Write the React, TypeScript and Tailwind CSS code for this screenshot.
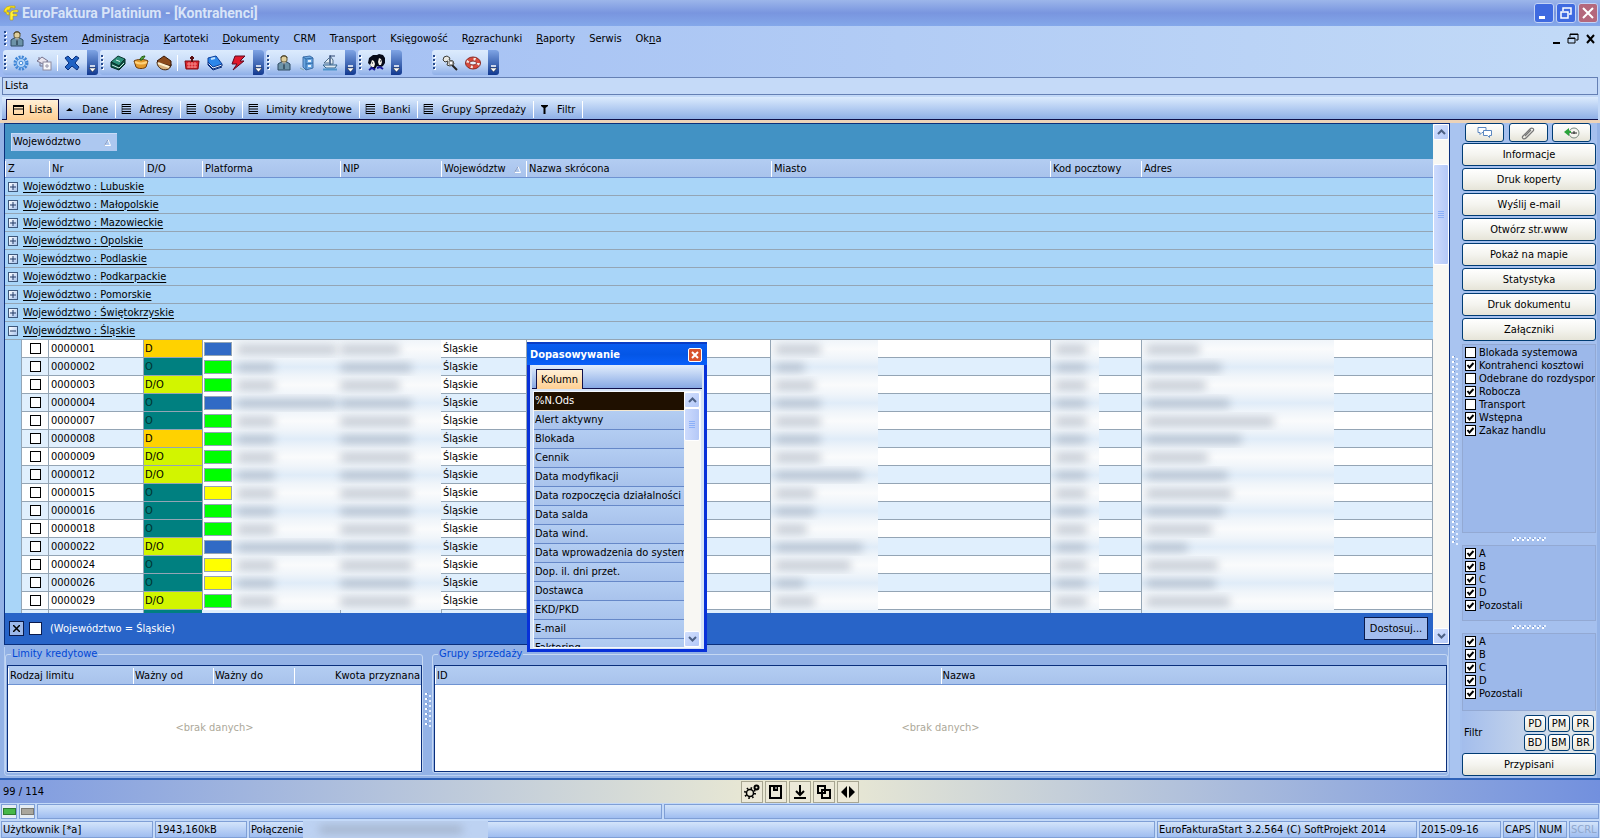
import { useState } from 'react';
import type { ReactNode } from 'react';

const MENU = [
  ['', 'S', 'ystem'],
  ['', 'A', 'dministracja'],
  ['', 'K', 'artoteki'],
  ['', 'D', 'okumenty'],
  ['CRM', '', ''],
  ['Transport', '', ''],
  ['Księ', 'g', 'owość'],
  ['R', 'o', 'zrachunki'],
  ['', 'R', 'aporty'],
  ['Serwis', '', ''],
  ['Ok', 'n', 'a'],
];

const TABS = [
  { label: 'Lista', icon: 'window' },
  { label: 'Dane', icon: 'up' },
  { label: 'Adresy', icon: 'list' },
  { label: 'Osoby', icon: 'list' },
  { label: 'Limity kredytowe', icon: 'list' },
  { label: 'Banki', icon: 'list' },
  { label: 'Grupy Sprzedaży', icon: 'list' },
  { label: 'Filtr', icon: 'filter' },
];

const GROUPS = ['Lubuskie', 'Małopolskie', 'Mazowieckie', 'Opolskie', 'Podlaskie', 'Podkarpackie', 'Pomorskie', 'Świętokrzyskie', 'Śląskie'];

const SWATCH: Record<string, string> = {
  b: 'bg-[#316ac5]',
  g: 'bg-[#00ff00]',
  y: 'bg-[#ffff00]',
};

const KIND: Record<string, string> = {
  D: 'bg-[#ffd200]',
  O: 'bg-[#008080] text-[#00332f]',
  'D/O': 'bg-[#d2f500]',
};

// nr, kind, swatch, widths of the hidden texts: name, nip, city, street
const ROWS: [string, string, string, number, number, number, number][] = [
  ['0000001', 'D', 'b', 100, 60, 46, 54],
  ['0000002', 'O', 'g', 38, 72, 30, 76],
  ['0000003', 'D/O', 'g', 38, 60, 40, 60],
  ['0000004', 'O', 'b', 100, 72, 46, 84],
  ['0000007', 'O', 'g', 38, 72, 46, 128],
  ['0000008', 'D', 'g', 38, 72, 46, 96],
  ['0000009', 'D/O', 'g', 38, 72, 46, 62],
  ['0000012', 'D/O', 'g', 38, 72, 88, 82],
  ['0000015', 'O', 'y', 38, 72, 40, 86],
  ['0000016', 'O', 'g', 38, 72, 40, 78],
  ['0000018', 'O', 'g', 38, 72, 32, 66],
  ['0000022', 'D/O', 'b', 100, 72, 88, 42],
  ['0000024', 'O', 'y', 38, 72, 76, 72],
  ['0000026', 'O', 'y', 38, 72, 30, 70],
  ['0000029', 'D/O', 'g', 38, 72, 40, 84],
];

const ACTIONS = ['Informacje', 'Druk koperty', 'Wyślij e-mail', 'Otwórz str.www', 'Pokaż na mapie', 'Statystyka', 'Druk dokumentu', 'Załączniki'];

const FLAGS: [string, boolean][] = [
  ['Blokada systemowa', false],
  ['Kontrahenci kosztowi', true],
  ['Odebrane do rozdysponowania', false],
  ['Robocza', true],
  ['Transport', false],
  ['Wstępna', true],
  ['Zakaz handlu', true],
];

const CLASSES: [string, boolean][] = [['A', true], ['B', true], ['C', true], ['D', true], ['Pozostali', true]];

const COLUMNS = [
  '%N.Ods', 'Alert aktywny', 'Blokada', 'Cennik', 'Data modyfikacji', 'Data rozpoczęcia działalności', 'Data salda', 'Data wind.',
  'Data wprowadzenia do systemu', 'Dop. il. dni przet.', 'Dostawca', 'EKD/PKD', 'E-mail', 'Faktoring',
];

const BTN = 'rounded-[3px] border border-[#003c74] bg-linear-to-b from-white via-[#f4f4ef] to-[#e6e4d8]';
const HEAD = 'border-b border-[#6f93d2] bg-linear-to-b from-[#b3cdf2] to-[#a9c3ec] align-bottom font-normal';

function Svg({ size = 16, children }: { size?: number; children: ReactNode }) {
  return <svg width={size} height={size} viewBox={`0 0 ${size} ${size}`} fill="none">{children}</svg>;
}

function Person() {
  return (
    <Svg>
      <path d="M2 9l3-2h6l3 2v6H2z" fill="#6d93a8" stroke="#2e4a63" />
      <path d="M6 7l2 3 2-3z" fill="#fff" />
      <path d="M8 8v6" stroke="#123" />
      <rect x="5" y="1" width="6" height="6" rx="2" fill="#e0cf9c" stroke="#5f5636" />
      <path d="M5 3c0-3 6-3 6 0" stroke="#4a4128" />
    </Svg>
  );
}

const TOOL_ICONS: Record<string, ReactNode> = {
  gear: (
    <Svg>
      <circle cx="8" cy="8" r="6" stroke="#3f86d6" strokeWidth="3" strokeDasharray="2 1.14" />
      <circle cx="8" cy="8" r="4.5" fill="#b8d8fa" stroke="#4a8fdc" />
      <circle cx="8" cy="8" r="1.8" fill="#eef6ff" stroke="#3f86d6" />
    </Svg>
  ),
  house: (
    <Svg>
      <path d="M1 6l5-4 6 4-5 3z" fill="#e8e4ee" stroke="#77728c" />
      <path d="M3 2v3M4 8v3h3" stroke="#77728c" />
      <rect x="7" y="7" width="8" height="8" fill="#f7f7fa" stroke="#8c8aa0" />
      <path d="M9 11h4M11 9v4" stroke="#9a98ac" />
    </Svg>
  ),
  cross: (
    <Svg>
      <path d="M1 3l3-2 4 4 4-4 3 2-4 5 4 4-2 3-5-4-4 4-3-3 4-4z" fill="#1f62c4" stroke="#0a2f7c" />
    </Svg>
  ),
  book: (
    <Svg>
      <path d="M1 7l7-6 7 3-6 7z" fill="#2e8f7a" stroke="#0a3830" />
      <path d="M1 7v5l8 3v-4zM9 11l6-7v5l-6 6z" fill="#0d5c4c" stroke="#062a24" />
      <path d="M2 10l7 3 5-5" stroke="#cfe8e0" />
      <path d="M6 5l4 1.500" stroke="#d6f0e8" />
    </Svg>
  ),
  basket: (
    <Svg>
      <path d="M1 6c2-2 12-2 14 0l-2 6c-2 2-8 2-10 0z" fill="#e49a2c" stroke="#6b3a0c" />
      <path d="M2 7c4 2 8 2 12 0" stroke="#ffd27a" strokeWidth="2" />
      <path d="M7 5c0-3 3-4 5-4-1 2-2 3-3 4z" fill="#52a03a" stroke="#1f5a14" />
    </Svg>
  ),
  pot: (
    <Svg>
      <path d="M1 7c0 9 14 11 14 2" fill="#d9b27e" stroke="#3c220c" />
      <path d="M1 6l7-5 7 5v5L3 8z" fill="#8b4a1c" stroke="#36190a" />
      <path d="M2 8l11 4" stroke="#fff1cf" strokeWidth="2" />
    </Svg>
  ),
  cart: (
    <Svg>
      <path d="M1 6h14l-1 8H2z" fill="#d8242c" stroke="#7c0a10" />
      <path d="M3 9h10M3 12h10M5 7v6M8 7v6M11 7v6" stroke="#f58c8c" />
      <path d="M8 1v6M6 3h4" stroke="#5a1014" strokeWidth="2" />
    </Svg>
  ),
  blueBook: (
    <Svg>
      <path d="M1 9l5 5 9-3v-2" fill="#e9f0fa" stroke="#0d2f78" />
      <path d="M1 3l8-2 6 8-9 3-5-5z" fill="#2c86ea" stroke="#0a3c98" />
      <path d="M1 7v3l5 5 9-3" stroke="#0a2f80" />
      <path d="M4 4l4-1" stroke="#bfe0ff" strokeWidth="2" />
    </Svg>
  ),
  bolt: (
    <Svg>
      <path d="M5 1h10l-5 5h4L3 15l4-6H2z" fill="#e0182c" stroke="#5c0820" />
    </Svg>
  ),
  person: <Person />,
  building: (
    <Svg>
      <path d="M4 2l7-1 3 2v10l-7 2-3-3z" fill="#6aa6e0" stroke="#3e6ea8" />
      <path d="M4 2l3 2v11M7 4l7-1M7 9l7-1" stroke="#2f6aa8" />
      <path d="M9 6h3M9 11h3" stroke="#e4f2ff" strokeWidth="2" />
      <path d="M1 13l4 2" stroke="#8aa" />
    </Svg>
  ),
  ship: (
    <Svg>
      <path d="M8 1l3 4v4H8zM7 3L2 8h5" fill="#e4edf4" stroke="#4e6f8c" />
      <path d="M8 0v11M8 1h5" stroke="#2c4470" />
      <path d="M1 10h14l-2 3H4z" fill="#dfe9f2" stroke="#33648c" />
      <path d="M1 14.500h14" stroke="#4e94cc" strokeWidth="2" />
    </Svg>
  ),
  faces: (
    <Svg size={18}>
      <path d="M1 9l1-5 4-3h4l2-1 4 1 2 3v5l-2 3-2 1-4-1-2 3H3l1-3z" fill="#060a18" />
      <path d="M5 6l2 1 1 3-1 3H5L3 11l1-2zM12 4l2 1 1 3-1 3h-2l-1-3z" fill="#f2efe6" />
      <path d="M5 9h1M13 7h1" stroke="#060a18" />
      <path d="M2 16l3-2 3 2M10 14l3-1 3 2" stroke="#1a1a9c" strokeWidth="2" />
    </Svg>
  ),
  pin: (
    <Svg>
      <path d="M9 9l6 6" stroke="#222" strokeWidth="2" />
      <path d="M2 2l3-1 3 2-1 2 4 1 1 3-4 2-3-1 1-4-3 1-2-2z" fill="#e9e9e4" stroke="#3e3e38" />
      <circle cx="9" cy="8" r="2" fill="#fff" stroke="#777" />
    </Svg>
  ),
  buoy: (
    <Svg>
      <ellipse cx="8" cy="8" rx="5.500" ry="4" stroke="#d84a3c" strokeWidth="4" />
      <ellipse cx="8" cy="8" rx="5.500" ry="4" stroke="#f4ece8" strokeWidth="3" strokeDasharray="2 5.500" />
      <ellipse cx="8" cy="8" rx="7.500" ry="6" stroke="#8a2a22" />
      <ellipse cx="8" cy="8" rx="3.500" ry="2" fill="#e8f0fc" stroke="#8a2a22" />
    </Svg>
  ),
};

function Grip() {
  return (
    <svg width="6" height="18" viewBox="0 0 6 18" className="shrink-0">
      <path d="M3 2v15" stroke="#fff" strokeWidth="2" strokeDasharray="2 2" />
      <path d="M2 1v15" stroke="#274b8f" strokeWidth="2" strokeDasharray="2 2" />
    </svg>
  );
}

function ToolGroup({ items }: { items: string[] }) {
  return (
    <div className="flex h-[25px] items-center rounded-[3px] bg-linear-to-b from-[#dcebfd] via-[#c8dcf8] to-[#8fb0e8]">
      <Grip />
      {items.map((name, i) =>
        name === '|' ? (
          <span key={i} className="mx-[2px] h-4 w-px bg-white" />
        ) : (
          <button key={i} type="button" aria-label={name} className="flex h-6 w-[23px] items-center justify-center">
            {TOOL_ICONS[name]}
          </button>
        ),
      )}
      <button type="button" aria-label="options" className="ml-1 flex h-[25px] w-[11px] items-end justify-center rounded-r-[3px] bg-linear-to-b from-[#7fa4e4] to-[#12388f] pb-[3px]">
        <svg width="7" height="7" viewBox="0 0 7 7">
          <path d="M1 1h5" stroke="#fff" strokeWidth="1.500" />
          <path d="M0 3h7L3.500 7z" fill="#fff" stroke="#000" strokeWidth=".4" />
        </svg>
      </button>
    </div>
  );
}

function TabIcon({ name }: { name: string }) {
  if (name === 'window') return <Svg size={11}><path d="M.500 1.500h10v8H.500zM.500 4h10" stroke="#000" /><path d="M0 1h11" stroke="#000" strokeWidth="2" /></Svg>;
  if (name === 'up') return <Svg size={11}><path d="M2 7h7L5.500 4z" fill="#000" /></Svg>;
  if (name === 'filter') return <Svg size={11}><path d="M2 1h7v1L6.500 4v6h-2V4L2 2z" fill="#000" /></Svg>;
  return <Svg size={11}><path d="M1 .500h9M1 2.500h9M1 5h9M1 7.500h9M1 9.500h9" stroke="#000" /><path d="M1 0v10" stroke="#000" strokeWidth=".6" /></Svg>;
}

function Check({ label, defaultChecked = false, bare = false }: { label: string; defaultChecked?: boolean; bare?: boolean }) {
  return (
    <label className="flex items-center gap-[3px] whitespace-nowrap">
      <span className="relative flex h-[11px] w-[11px] shrink-0">
        <input type="checkbox" aria-label={bare ? label : undefined} defaultChecked={defaultChecked} className="peer h-[11px] w-[11px] appearance-none border border-black bg-white" />
        <svg width="11" height="11" viewBox="0 0 11 11" className="pointer-events-none absolute inset-0 hidden peer-checked:block">
          <path d="M2.500 5l2 2.500 4-4.500" fill="none" stroke="#000" strokeWidth="2" />
        </svg>
      </span>
      {!bare && <span>{label}</span>}
    </label>
  );
}

function CheckPanel({ items, className }: { items: [string, boolean][]; className: string }) {
  return (
    <div className={`overflow-hidden border border-[#93a9d3] bg-[#9cb8ea] pt-px pl-[2px] leading-[13px] ${className}`}>
      {items.map(([label, on]) => <Check key={label} label={label} defaultChecked={on} />)}
    </div>
  );
}

function Dots({ vertical = false, count }: { vertical?: boolean; count: number }) {
  const cells = Array.from({ length: count }, (_, i) => i * 5);
  return (
    <svg width={vertical ? 8 : count * 5} height={vertical ? count * 5 : 6} className="shrink-0">
      {cells.map(p => (
        <g key={p}>
          <rect x={vertical ? 1 : p} y={vertical ? p : 3} width="2" height="2" fill="#fff" />
          <rect x={vertical ? 5 : p + 2} y={vertical ? p + 2 : 1} width="2" height="2" fill="#e6f0ff" />
          <rect x={vertical ? 3 : p + 1} y={vertical ? p : 2} width="1" height="1" fill="#6f90c8" />
        </g>
      ))}
    </svg>
  );
}

function Chevron({ down = false }: { down?: boolean }) {
  return (
    <button type="button" aria-label={down ? 'w dół' : 'w górę'} className="flex h-[16px] w-full shrink-0 items-center justify-center rounded-[2px] border border-white bg-linear-to-br from-[#d3e0fd] to-[#b3c8f8]">
      <svg width="9" height="6" viewBox="0 0 9 6">
        <path d={down ? 'M1 1l3.500 3.500L8 1' : 'M1 5l3.500-3.500L8 5'} fill="none" stroke="#4d6185" strokeWidth="2" />
      </svg>
    </button>
  );
}

function Scrollbar({ spacer, thumb }: { spacer: string; thumb: string }) {
  return (
    <div className="flex w-4 shrink-0 flex-col bg-[#f8f7f3]">
      <Chevron />
      <div className={spacer} />
      <div className={`flex shrink-0 flex-col items-center justify-center gap-px rounded-[2px] border border-white bg-linear-to-r from-[#cddbfd] to-[#b4c8f7] ${thumb}`}>
        {[0, 1, 2, 3].map(i => <span key={i} className="h-px w-[6px] border-b border-[#8cb0f8] bg-white" />)}
      </div>
      <div className="flex-1" />
      <Chevron down />
    </div>
  );
}

function Smudge({ width }: { width: number }) {
  return <span className="block h-[9px] rounded bg-[#8f9cae]/50 blur-[4px]" style={{ width }} />;
}

function GridHead({ children, span = 1 }: { children: ReactNode; span?: number }) {
  return (
    <th colSpan={span} className={`h-[19px] overflow-hidden p-0 text-left whitespace-nowrap ${HEAD}`}>
      <div className="flex h-4 items-center gap-2 border-l border-white pl-[2px]">{children}</div>
    </th>
  );
}

function SortMark() {
  return <svg width="7" height="7" viewBox="0 0 7 7"><path d="M.500 6.500h6L4 .500z" fill="none" stroke="#fff" /><path d="M.500 6.500L4 .500" stroke="#7d93bd" /></svg>;
}

function DataGrid() {
  return (
    <table className="w-full table-fixed border-separate border-spacing-0">
      <colgroup>
        <col className="w-[16px]" />
        <col className="w-[28px]" />
        <col className="w-[95px]" />
        <col className="w-[58px]" />
        <col className="w-[138px]" />
        <col className="w-[101px]" />
        <col className="w-[85px]" />
        <col className="w-[245px]" />
        <col className="w-[279px]" />
        <col className="w-[91px]" />
        <col />
      </colgroup>
      <thead>
        <tr>
          <GridHead span={2}>Z</GridHead>
          <GridHead>Nr</GridHead>
          <GridHead>D/O</GridHead>
          <GridHead>Platforma</GridHead>
          <GridHead>NIP</GridHead>
          <GridHead>Województw <SortMark /></GridHead>
          <GridHead>Nazwa skrócona</GridHead>
          <GridHead>Miasto</GridHead>
          <GridHead>Kod pocztowy</GridHead>
          <GridHead>Adres</GridHead>
        </tr>
      </thead>
      <tbody>
        {GROUPS.map(name => (
          <tr key={name}>
            <td colSpan={11} className="h-[18px] border-b border-[#94a5b5] bg-[#a9d5f8] p-0 pl-[3px]">
              <div className="flex items-center gap-[5px]">
                <button type="button" aria-label={name} className="flex h-[10px] w-[10px] items-center justify-center border border-[#3e587c] bg-linear-to-br from-white to-[#a9c4ee]">
                  <svg width="6" height="6" viewBox="0 0 6 6"><path d={name === 'Śląskie' ? 'M0 3h6' : 'M0 3h6M3 0v6'} stroke="#223a66" /></svg>
                </button>
                <span className="underline underline-offset-2">Województwo : {name}</span>
              </div>
            </td>
          </tr>
        ))}
        {ROWS.map(([nr, kind, color, name, nip, city, street], i) => {
          const cell = `h-[18px] border-b border-[#94a5b5] p-0 ${i % 2 ? 'bg-[#e0effd]' : 'bg-white'}`;
          const veil = i % 2 ? 'bg-linear-to-b from-[#f0f5fa] via-[#e0ecf8] to-[#f0f5fa]' : 'bg-linear-to-b from-[#f0f5fa] via-[#fafbfc] to-[#f0f5fa]';
          return (
            <tr key={nr}>
              <td className="bg-[#a9d5f8] p-0" />
              <td className={`${cell} border-x border-x-[#94a5b5]`}>
                <div className="flex justify-center"><Check label={nr} bare /></div>
              </td>
              <td className={`${cell} border-r border-r-[#94a5b5] pl-[2px]`}>{nr}</td>
              <td className={`h-[18px] border-b border-[#94a5b5] p-0 pl-px ${KIND[kind]}`}>{kind}</td>
              <td colSpan={2} className={`h-[18px] p-0 ${veil}`}>
                <div className="flex h-[18px] items-center overflow-hidden">
                  <div className="flex h-[18px] w-[31px] shrink-0 items-center border-l border-[#94a5b5] bg-white pl-px">
                    <span className={`h-[14px] w-7 border border-[#94a5b5] ${SWATCH[color]}`} />
                  </div>
                  <div className="w-[107px] shrink-0 pl-1"><Smudge width={name} /></div>
                  <Smudge width={nip} />
                </div>
              </td>
              <td className={`${cell} pl-[2px]`}>Śląskie</td>
              <td className={`${cell} border-x border-x-[#94a5b5]`} />
              <td className={cell}>
                <div className={`-mb-px flex h-[18px] w-[107px] items-center overflow-hidden pl-1 ${veil}`}><Smudge width={city} /></div>
              </td>
              <td className={`${cell} border-l border-l-[#94a5b5]`}>
                <div className={`-mb-px flex h-[18px] w-12 items-center overflow-hidden pl-1 ${veil}`}><Smudge width={32} /></div>
              </td>
              <td className={`${cell} border-x border-x-[#94a5b5]`}>
                <div className={`-mb-px flex h-[18px] w-[192px] items-center overflow-hidden pl-1 ${veil}`}><Smudge width={street} /></div>
              </td>
            </tr>
          );
        })}
        {/* top edge of the next record, cut by the filter bar */}
        <tr>
          <td className="h-[18px] bg-[#a9d5f8] p-0" />
          <td className="border-x border-[#94a5b5] bg-[#e0effd] p-0" />
          <td className="border-r border-[#94a5b5] bg-[#e0effd] p-0" />
          <td className="bg-[#008080] p-0" />
          <td className="bg-[#e0effd] p-0" />
          <td className="border-l border-[#94a5b5] bg-[#e0effd] p-0" />
          <td className="border-l border-[#94a5b5] bg-[#e0effd] p-0" />
          <td className="border-x border-[#94a5b5] bg-[#e0effd] p-0" />
          <td className="bg-[#e0effd] p-0" />
          <td className="border-l border-[#94a5b5] bg-[#e0effd] p-0" />
          <td className="border-x border-[#94a5b5] bg-[#e0effd] p-0" />
        </tr>
      </tbody>
    </table>
  );
}

function Box({ title, head, className }: { title: string; head: [string, string][]; className: string }) {
  return (
    <fieldset className={`flex min-w-0 flex-col rounded-[3px] border border-[#c5d8f3] p-0 ${className}`}>
      <legend className="ml-[5px] h-[14px] px-px leading-[14px] text-[#0046d5]">{title}</legend>
      <div className="ml-px mt-1 flex flex-1 flex-col border border-[#0a2f7c] bg-white">
        <table className="w-full table-fixed border-separate border-spacing-0">
          <thead>
            <tr>
              {head.map(([label, cls]) => (
                <th key={label} className={`h-[19px] p-0 whitespace-nowrap ${HEAD} ${cls}`}>
                  <div className="h-4 border-l border-white px-px leading-4">{label}</div>
                </th>
              ))}
            </tr>
          </thead>
        </table>
        <div className="flex flex-1 items-center justify-center text-[#aca899]">&lt;brak danych&gt;</div>
      </div>
    </fieldset>
  );
}

function Sidebar() {
  return (
    <aside className="flex w-[137px] shrink-0 flex-col bg-[#a5c0ee] pr-px pl-[2px]">
      <div className="flex h-[20px] justify-between pr-[5px] pl-[3px]">
        <button type="button" aria-label="Rozmowy" className={`flex h-[19px] w-[39px] items-center justify-center ${BTN}`}>
          <Svg><path d="M1 2.500h8v5H5l-2 2v-2H1z" fill="#fff" stroke="#5b87c0" /><path d="M6.500 5.500h8v5h-2v2l-2-2h-4z" fill="#fff" stroke="#5b87c0" /></Svg>
        </button>
        <button type="button" aria-label="Załącz" className={`flex h-[19px] w-[39px] items-center justify-center ${BTN}`}>
          <Svg><path d="M4 10l6-6c2-2 5 0 3 2l-7 7c-2 2-5 0-3-2l7-7M5 11l6-6" stroke="#777" strokeWidth="1.200" /></Svg>
        </button>
        <button type="button" aria-label="Historia" className={`flex h-[19px] w-[39px] items-center justify-center ${BTN}`}>
          <Svg><circle cx="10" cy="8" r="5" fill="#f4f4ee" stroke="#7a8a80" /><path d="M7 8h6M10 6v3" stroke="#222" /><path d="M0 7l5-4v3h2v2H5v3z" fill="#2ba33a" /></Svg>
        </button>
      </div>
      <div className="flex flex-col gap-[2px]">
        {ACTIONS.map(a => <button key={a} type="button" className={`h-[23px] ${BTN}`}>{a}</button>)}
      </div>
      <CheckPanel items={FLAGS} className="mt-[3px] flex-1" />
      <div className="flex h-[12px] items-center justify-center"><Dots count={7} /></div>
      <CheckPanel items={CLASSES} className="h-[76px]" />
      <div className="flex h-[12px] items-center justify-center"><Dots count={7} /></div>
      <CheckPanel items={CLASSES} className="h-[78px]" />
      <div className="flex h-[42px] items-center justify-between bg-linear-to-r from-[#a3bdec] to-[#e8ebe8] px-[2px] pt-px">
        <span>Filtr</span>
        <div className="grid grid-cols-3 gap-[2px]">
          {['PD', 'PM', 'PR', 'BD', 'BM', 'BR'].map(f => <button key={f} type="button" className={`h-[17px] w-[22px] leading-[15px] ${BTN}`}>{f}</button>)}
        </div>
      </div>
      <button type="button" className={`mb-[2px] h-[23px] shrink-0 ${BTN}`}>Przypisani</button>
    </aside>
  );
}

function ColumnDialog({ onClose }: { onClose: () => void }) {
  const [selected, setSelected] = useState('%N.Ods');
  return (
    <div role="dialog" aria-label="Dopasowywanie" className="absolute top-[342px] left-[527px] flex h-[310px] w-[180px] flex-col border-x-[3px] border-b-[3px] border-[#0831d9] bg-[#d7e4f6]">
      <div className="-mx-[3px] flex h-[23px] shrink-0 items-center justify-between border-t-2 border-[#0a3cc4] bg-linear-to-b from-[#0a5cf0] via-[#0456e6] to-[#0a60fa] pr-[5px] pl-[3px]">
        <span className="font-bold text-white">Dopasowywanie</span>
        <button type="button" aria-label="Zamknij" onClick={onClose} className="flex h-[14px] w-[14px] items-center justify-center rounded-[2px] border border-white bg-[#d8522c]">
          <svg width="8" height="8" viewBox="0 0 8 8"><path d="M1 1l6 6M7 1L1 7" stroke="#fff" strokeWidth="2" /></svg>
        </button>
      </div>
      <div className="mx-[2px] flex h-[24px] shrink-0 items-end border-b border-[#10104a] bg-linear-to-b from-[#e3eefc] to-[#88a9e4] pl-1">
        <button type="button" className="-mb-px h-[20px] border-x border-t border-[#10104a] bg-linear-to-b from-[#fff0d6] to-[#ffcf92] px-1">Kolumn</button>
      </div>
      <div className="mx-[3px] mt-[2px] mb-px flex min-h-0 flex-1 border border-[#f4f8ff] bg-white">
        <ul className="min-w-0 flex-1 overflow-hidden">
          {COLUMNS.map(c => (
            <li key={c}>
              <button
                type="button"
                onClick={() => setSelected(c)}
                className={`block h-[19px] w-full overflow-hidden border-b pl-px text-left leading-[18px] whitespace-nowrap ${selected === c ? 'border-[#f4e8d0] bg-[#1f1000] text-white' : 'border-[#6688c8] bg-linear-to-b from-[#b3cdf2] to-[#a9c3ec]'}`}
              >
                {c}
              </button>
            </li>
          ))}
        </ul>
        <Scrollbar spacer="" thumb="h-[33px]" />
      </div>
    </div>
  );
}

const NAV_ICONS = [
  <Svg key="gear"><circle cx="6" cy="9" r="3.500" stroke="#000" strokeWidth="1.500" /><circle cx="6" cy="9" r="5" stroke="#000" strokeWidth="2" strokeDasharray="1.500 2.430" /><circle cx="12.500" cy="3.500" r="2" stroke="#000" strokeWidth="2" /></Svg>,
  <Svg key="save"><path d="M2 2h11v12H2z" stroke="#000" strokeWidth="2" /><path d="M5 2h5v5H5z" fill="#000" /><path d="M8 3v2" stroke="#fff" /></Svg>,
  <Svg key="down"><path d="M8 1v10M4 7l4 4 4-4M2 14h12" stroke="#000" strokeWidth="2" /></Svg>,
  <Svg key="copy"><path d="M2 2h7v7H2zM6 6h8v8H6z" stroke="#000" strokeWidth="2" /></Svg>,
  <Svg key="fit"><path d="M7 2v12L1 8zM9 2v12l6-6z" fill="#000" /></Svg>,
];

const CAPTION = 'flex h-[20px] w-[20px] items-center justify-center rounded-[3px] border border-[#c3d3f5]';
const STATUS = 'flex items-center border border-[#7f9fd6] bg-linear-to-b from-[#d3e4fa] to-[#9fbdf0] pl-px';

export default function App() {
  const [tab, setTab] = useState('Lista');
  const [dialog, setDialog] = useState(true);

  return (
    <div className="relative flex h-screen flex-col overflow-hidden bg-[#c3d9f8] font-['Tahoma','DejaVu_Sans_Condensed','Noto_Sans',sans-serif] text-[11px] leading-[14px] text-black">
      <header className="flex h-[26px] shrink-0 items-center justify-between bg-linear-to-b from-[#9cb6ea] via-[#7995df] to-[#84a8ea] pr-[2px] pl-[3px]">
        <div className="flex items-center gap-[3px]">
          <Svg>
            <path d="M8 1C3 1 1 4 1 7h2c0 2 1 3 3 3V7H4V5h3V3c1-1 3 0 5 0V1z" fill="#ffe81a" stroke="#b89c00" strokeWidth=".6" />
            <path d="M7 15V8c1-3 4-3 8-3v2h-5v2h4v2h-4v4z" fill="#fff23c" stroke="#b89c00" strokeWidth=".6" />
          </Svg>
          <h1 className="font-['Roboto',sans-serif] text-[14px] font-bold text-[#d8e4f8]">EuroFaktura Platinium - [Kontrahenci]</h1>
        </div>
        <div className="flex gap-[2px]">
          <button type="button" aria-label="Minimalizuj" className={`${CAPTION} bg-[#3f6ae0]`}><Svg><path d="M3 12.500h6" stroke="#fff" strokeWidth="3" /></Svg></button>
          <button type="button" aria-label="Przywróć" className={`${CAPTION} bg-[#3f6ae0]`}><Svg><path d="M5 6V3h8v6h-2M5 3h8" stroke="#fff" strokeWidth="1.500" /><path d="M3 7h7v6H3z" stroke="#fff" strokeWidth="1.500" /></Svg></button>
          <button type="button" aria-label="Zamknij program" className={`${CAPTION} bg-[#b4687c]`}><Svg><path d="M3 3l10 10M13 3L3 13" stroke="#fff" strokeWidth="2" /></Svg></button>
        </div>
      </header>

      <div className="shrink-0 bg-linear-to-r from-[#9ebaf2] to-[#c2daf7] pb-[2px]">
        <div className="flex h-6 items-center pt-[2px] pr-[3px] pl-[3px]">
          <Grip />
          <Person />
          <nav className="flex flex-1 gap-[14px] pl-[6px]">
            {MENU.map(([a, u, b]) => <a key={a + u + b} href="#">{a}<u>{u}</u>{b}</a>)}
          </nav>
          <div className="flex gap-[3px]">
            <button type="button" aria-label="Minimalizuj okno"><Svg size={14}><path d="M4 11h7" stroke="#000" strokeWidth="2" /></Svg></button>
            <button type="button" aria-label="Przywróć okno"><Svg size={14}><path d="M4 5V2h8v6h-2M4 2.500h8" stroke="#000" /><path d="M2 6h7v5H2zM2 6.500h7" stroke="#000" /></Svg></button>
            <button type="button" aria-label="Zamknij okno"><Svg size={14}><path d="M4 3l7 8M11 3l-7 8" stroke="#000" strokeWidth="2" /></Svg></button>
          </div>
        </div>
        <div className="flex gap-[2px] pl-[3px]">
          <ToolGroup items={['gear', 'house', '|', 'cross']} />
          <ToolGroup items={['book', 'basket', 'pot', '|', 'cart', 'blueBook', 'bolt']} />
          <ToolGroup items={['person', 'building', 'ship']} />
          <ToolGroup items={['faces']} />
          <div className="w-[26px]" />
          <ToolGroup items={['pin', 'buoy']} />
        </div>
      </div>

      <div className="mx-[2px] flex h-[18px] shrink-0 items-center border border-[#6580b4] bg-[#c5daf8] pl-[2px]">Lista</div>

      <div className="mx-[2px] mt-[2px] flex h-[23px] shrink-0 items-end border-b border-[#10104a] bg-linear-to-b from-[#dcebfd] to-[#8fb0e6] pl-1">
        {TABS.map(t => (
          <button
            key={t.label}
            type="button"
            onClick={() => setTab(t.label)}
            className={tab === t.label
              ? '-mb-px flex h-[21px] items-center gap-[5px] border-x border-t border-[#10104a] bg-linear-to-b from-[#fff0d6] to-[#ffcf92] px-[6px]'
              : 'my-px flex h-[17px] items-center gap-[7px] border-r border-white pr-[7px] pl-[5px]'}
          >
            <TabIcon name={t.icon} />
            {t.label}
          </button>
        ))}
      </div>
      <div className="h-[3px] shrink-0 bg-[#ecd3b8]" />

      <main className="flex min-h-0 flex-1 border-b-2 border-[#2f62b8] bg-[#93b2e6] pr-[3px] pl-1">
        <div className="flex min-w-0 flex-1 flex-col">
          <section className="flex min-h-0 flex-1 border border-[#0a2f7c] bg-white">
            <div className="flex min-w-0 flex-1 flex-col">
              <div className="flex h-[35px] shrink-0 items-center bg-[#4292c4] pl-[6px]">
                <button type="button" className="flex h-[18px] w-[106px] items-center justify-between border-t border-l border-[#c8dcf8] bg-[#adc8f0] pr-[6px] pl-px">Województwo <SortMark /></button>
              </div>
              <div className="min-h-0 flex-1 overflow-hidden"><DataGrid /></div>
              <div className="flex h-[31px] shrink-0 items-center gap-[5px] bg-[#2864c8] pr-[5px] pl-1 text-white">
                <button type="button" aria-label="Usuń filtr" className="flex h-[15px] w-[15px] items-center justify-center border border-[#0a1a4c] bg-[#9cb8ea]">
                  <svg width="7" height="7" viewBox="0 0 7 7"><path d="M0 0l7 7M7 0L0 7" stroke="#000" strokeWidth="1.500" /></svg>
                </button>
                <input type="checkbox" aria-label="Filtr aktywny" className="h-[13px] w-[13px] appearance-none border border-[#0a1a4c] bg-white" />
                <span className="flex-1 pl-[3px]">(Województwo = Śląskie)</span>
                <button type="button" className="h-[23px] w-[64px] border border-[#0a1a4c] bg-[#a3bdee] text-black">Dostosuj...</button>
              </div>
            </div>
            <Scrollbar spacer="h-[24px] shrink-0" thumb="h-[101px]" />
          </section>

          <div className="mt-[2px] mr-px mb-[2px] flex h-[129px] shrink-0 rounded-b border-x border-b border-[#b9d0f2] pb-[2px]">
            <Box
              title="Limity kredytowe"
              className="w-[418px] shrink-0"
              head={[
                ['Rodzaj limitu', 'w-[125px] text-left'],
                ['Ważny od', 'w-[80px] text-left'],
                ['Ważny do', 'w-[81px] text-left'],
                ['Kwota przyznana', 'text-right'],
              ]}
            />
            <div className="flex w-[9px] shrink-0 items-center justify-center"><Dots vertical count={7} /></div>
            <Box title="Grupy sprzedaży" className="flex-1" head={[['ID', 'w-1/2 text-left'], ['Nazwa', 'w-1/2 text-left']]} />
          </div>
        </div>
        <div className="flex w-[10px] shrink-0 items-center justify-center bg-[#a9c4f0]"><Dots vertical count={38} /></div>
        <Sidebar />
      </main>

      <div className="flex h-[23px] shrink-0 items-center bg-linear-to-r from-[#7f9be0] via-[#efecd2] to-[#7290de] px-[3px]">
        <span className="flex-1">99 / 114</span>
        <div className="flex gap-[2px]">
          {NAV_ICONS.map((icon, i) => <button key={i} type="button" aria-label={`akcja ${i + 1}`} className="flex h-[22px] w-[22px] items-center justify-center border border-[#a8a692] bg-[#ece9d8]">{icon}</button>)}
        </div>
        <span className="flex-1" />
      </div>

      <div className="flex h-[16px] shrink-0 gap-[2px] px-px pt-px">
        <span className="flex w-4 items-center justify-center border border-[#7f9fd6] bg-[#e4ecf4]"><span className="h-[7px] w-[13px] border border-[#2c7a30] bg-[#46b848]" /></span>
        <span className="flex w-4 items-center justify-center border border-[#7f9fd6] bg-[#e4ecf4]"><span className="h-[7px] w-[13px] border border-[#7a7a74] bg-[#a9a69c]" /></span>
        <span className={`${STATUS} w-[625px] shrink-0`} />
        <span className={`${STATUS} flex-1`} />
      </div>

      <footer className="flex h-[19px] shrink-0 gap-[2px] px-px pt-[2px] whitespace-nowrap">
        <span className={`${STATUS} w-[152px] shrink-0`}>Użytkownik [*a]</span>
        <span className={`${STATUS} w-[92px] shrink-0`}>1943,160kB</span>
        <span className={`${STATUS} min-w-0 flex-1`}>
          Połączenie
          <span className="flex h-[17px] w-[185px] items-center overflow-hidden bg-[#bdd2f2] pl-4"><Smudge width={144} /></span>
        </span>
        <span className={`${STATUS} w-[260px] shrink-0`}>EuroFakturaStart 3.2.564 (C) SoftProjekt 2014</span>
        <span className={`${STATUS} w-[82px] shrink-0`}>2015-09-16</span>
        <span className={`${STATUS} w-[32px] shrink-0`}>CAPS</span>
        <span className={`${STATUS} w-[30px] shrink-0`}>NUM</span>
        <span className={`${STATUS} w-[30px] shrink-0 overflow-hidden text-[#8ea6cc]`}>SCRL</span>
      </footer>

      {dialog && <ColumnDialog onClose={() => setDialog(false)} />}
    </div>
  );
}
